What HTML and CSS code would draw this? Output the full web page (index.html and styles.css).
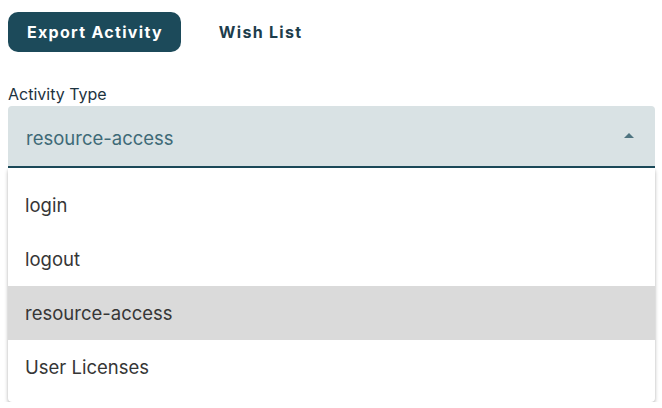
FILE: index.html
```html
<!DOCTYPE html>
<html>
<head>
<meta charset="utf-8">
<link rel="stylesheet" href="styles.css">
</head>
<body>
<div class="page">
  <div class="tabs">
    <button class="tab active">Export Activity</button>
    <button class="tab">Wish List</button>
  </div>
  <div class="field">
    <label class="label">Activity Type</label>
    <div class="select">
      <span class="value">resource-access</span>
      <svg class="arrow" width="10" height="5" viewBox="0 0 10 5"><path d="M0 5 L5 0 L10 5 Z" fill="#4f7480"/></svg>
    </div>
    <ul class="menu">
      <li class="item">login</li>
      <li class="item">logout</li>
      <li class="item selected">resource-access</li>
      <li class="item">User Licenses</li>
    </ul>
  </div>
</div>
</body>
</html>
```
FILE: styles.css
```css
* { box-sizing: border-box; }
html, body { margin: 0; padding: 0; background: #fff; }
body { font-family: Inter, "Noto Sans", sans-serif; }
.page { padding: 12px 7px 0 8px; }
.tabs { display: flex; gap: 19px; align-items: center; }
.tab {
  font-family: Inter, sans-serif;
  font-weight: 700;
  font-size: 16px;
  letter-spacing: 1.3px;
  border: none;
  background: transparent;
  color: #1d3d4c;
  height: 40px;
  padding: 0 18px 0 19px;
  border-radius: 10px;
  cursor: pointer;
}
.tab.active { background: #1c4a5a; color: #fff; }
.field { margin-top: 33px; display: flex; flex-direction: column; }
.label { font-size: 16px; color: #1d3340; line-height: 18px; height: 21px; }
.select {
  height: 62px;
  background: #d9e2e4;
  border-radius: 4px 4px 0 0;
  border-bottom: 2px solid #1c4a5a;
  display: flex;
  align-items: center;
  justify-content: space-between;
  padding: 4px 21px 0 18px;
}
.value { font-size: 18.5px; color: #3e6a77; }
.arrow { display: block; margin-top: -6px; }
.menu {
  list-style: none;
  margin: 0;
  padding: 10px 0 8px;
  background: #fff;
  border-radius: 0 0 4px 4px;
  box-shadow: 0 3px 4px rgba(0,0,0,0.2), 0 1px 3px rgba(0,0,0,0.12);
}
.item {
  height: 54px;
  display: flex;
  align-items: center;
  padding: 0 17px;
  font-size: 18.5px;
  color: #363636;
}
.item.selected { background: #dadada; }
```
